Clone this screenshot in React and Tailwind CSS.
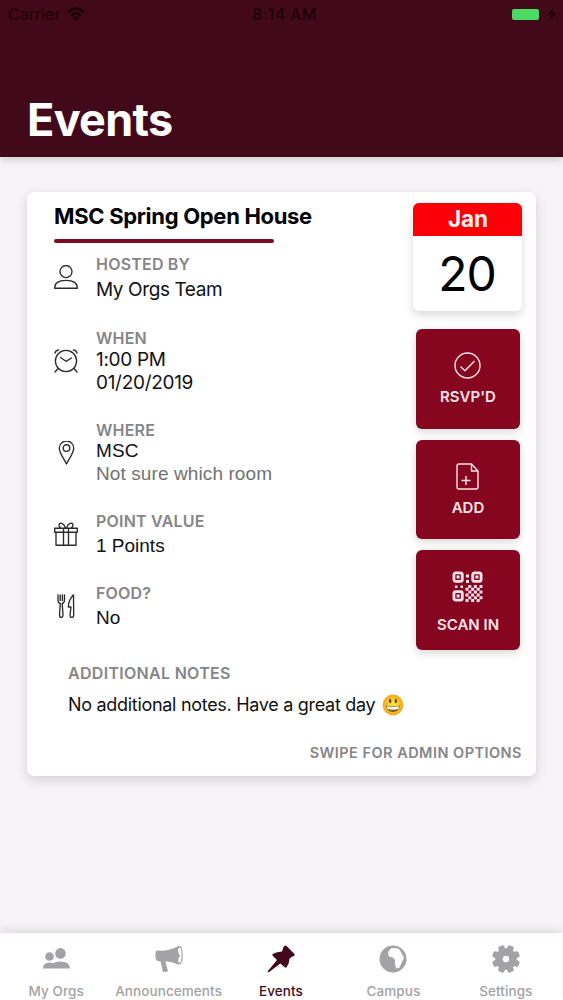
function Label({ children, className = "text-[16px] tracking-[0.2px]" }) {
  return (
    <div className={`pt-px leading-[20px] font-semibold whitespace-nowrap text-[#858587] ${className}`}>
      {children}
    </div>
  );
}

function Row({ icon, label, children, className = "" }) {
  return (
    <div className={`flex items-center gap-[18px] ${className}`}>
      <svg className="h-6 w-6 shrink-0" viewBox="0 0 24 24" fill="none" stroke="#2b2b2d" strokeWidth="1.350" strokeLinejoin="round" strokeLinecap="round">
        {icon}
      </svg>
      <div>
        <Label>{label}</Label>
        {children}
      </div>
    </div>
  );
}

function Action({ children, label, className = "" }) {
  return (
    <button className={`ml-px flex h-[99.5px] w-[104px] flex-col items-center rounded-[6px] bg-[#86051f] text-[#f8e4e8] shadow-[0_3px_8px_rgba(0,0,0,0.16)] ${className}`}>
      {children}
      <span className="text-[15px] leading-[20px] font-semibold whitespace-nowrap">{label}</span>
    </button>
  );
}

function Tab({ children, label, className = "text-[#a3a2a4]" }) {
  return (
    <div className={`flex flex-1 flex-col items-center pt-[10px] ${className}`}>
      <svg className="h-8 w-8" viewBox="0 0 32 32" fill="currentColor">{children}</svg>
      <span className="mt-[7px] text-[13.5px] leading-[18px] font-medium tracking-[0.08px] whitespace-nowrap">{label}</span>
    </div>
  );
}

const checks = [];
for (let r = 0; r < 6; r++) for (let c = 0; c < 6; c++) if ((r + c) % 2 === 1) checks.push([c, r]);

export default function App() {
  return (
    <div className="flex h-[1000px] w-[563px] flex-col overflow-hidden bg-[#f6f4f7] font-['Inter','Liberation_Sans',sans-serif] text-[#111]">
      <header className="flex h-[157px] shrink-0 flex-col bg-[#42091b] shadow-[0_2px_8px_rgba(0,0,0,0.2)]">
        <div className="grid h-7 grid-cols-3 items-center px-2 text-[16px] text-[#1b0209]">
          <div className="flex items-center gap-[7px]">
            <span>Carrier</span>
            <svg className="h-[15px] w-[18px]" viewBox="0 0 18 15" fill="none" stroke="currentColor" strokeWidth="2.600">
              <path d="M1 5.200Q9-2 17 5.200M4 8.500Q9 4.200 14 8.500" />
              <path d="M9 14 5.800 10.800Q9 8.400 12.200 10.800Z" fill="currentColor" stroke="none" />
            </svg>
          </div>
          <span className="pl-[6px] text-center font-medium tracking-[0.3px]">8:14 AM</span>
          <div className="-mr-px flex items-center justify-end gap-[9px]">
            <div className="h-[11px] w-[27px] rounded-[2px] bg-[#4cd964]" />
            <svg className="h-3 w-2" viewBox="0 0 8 12" fill="currentColor"><path d="M5 0 0 7h3.300L2.400 12 8 5H4.500Z" /></svg>
          </div>
        </div>
        <h1 className="mt-[65px] pl-[27px] text-[45px] leading-[54px] font-bold tracking-[-0.7px] text-white">Events</h1>
      </header>

      <main className="mt-[35px] ml-[27px] flex h-[584px] w-[509px] shrink-0 flex-col rounded-[7px] bg-white shadow-[0_4px_12px_rgba(0,0,0,0.15)]">
        <div className="flex h-[458px]">
          <div className="w-[386px] pl-[27px]">
            <h2 className="mt-[9px] text-[22px] leading-[30px] font-bold tracking-[-0.31px] whitespace-nowrap text-black">MSC Spring Open House</h2>
            <div className="mt-[8px] h-[4px] w-[220px] rounded-full bg-[#7f0a24]" />
            <Row className="mt-[10px]" label="HOSTED BY" icon={<>
              <circle cx="12" cy="6.600" r="6" /><path d="M.7 23.200C.5 18 4.500 15.400 12 15.400S23.500 18 23.300 23.200Z" />
            </>}>
              <div className="mt-[3px] pt-[2px] text-[19px] leading-[21px] tracking-[-0.4px] whitespace-nowrap">My Orgs Team</div>
            </Row>
            <Row className="mt-[27px]" label="WHEN" icon={<>
              <circle cx="12" cy="12" r="10.600" /><path d="M6.500 8.500 12 12.300 17.500 9M4 19.500 1 23M20 19.500 23 23M1 4Q1.500 1.500 4.500 1M23 4Q22.500 1.500 19.500 1" />
            </>}>
              <div className="text-[19px] leading-[23px] tracking-[-0.3px] whitespace-nowrap">1:00 PM</div>
              <div className="text-[19px] leading-[23px] tracking-[-0.3px] whitespace-nowrap">01/20/2019</div>
            </Row>
            <Row className="mt-[25px]" label="WHERE" icon={<>
              <path d="M12.500 23C10.500 18.500 5.300 12.200 5.300 7.200a7.200 7.200 0 0 1 14.400 0C19.700 12.200 14.500 18.500 12.500 23Z" /><circle cx="12.500" cy="7" r="3.300" />
            </>}>
              <div className="font-['Liberation_Sans',sans-serif] text-[19px] leading-[22px] tracking-[0.1px] whitespace-nowrap">MSC</div>
              <div className="pb-px font-['Liberation_Sans',sans-serif] text-[19px] leading-[23px] tracking-[0.1px] whitespace-nowrap text-[#717173]">Not sure which room</div>
            </Row>
            <Row className="mt-[24px]" label="POINT VALUE" icon={<>
              <path d="M.7 6.200H23.300V10.200H.7ZM2 10.200V23.200H22V10.200M9.500 6.200V23M14.500 6.200V23M11.500 6C10 1 5.500-.5 5 3Q4.800 5 7 6M12.500 6C14 1 18.500-.5 19 3Q19.200 5 17 6" />
            </>}>
              <div className="mt-[3px] font-['Liberation_Sans',sans-serif] text-[19px] leading-[23px] whitespace-nowrap">1 Points</div>
            </Row>
            <Row className="mt-[25px]" label="FOOD?" icon={<>
              <path d="M4 1V6Q4 9 6.300 9.500L5.500 21Q5.500 23.500 7.200 23.500T9 21L8.200 9.500Q10.500 9 10.500 6V1M6.200 1V6.500M8.400 1V6.500M19.500 .8C16.500 4 14.500 8 14.300 13H17L16 21Q16 23.500 17.800 23.500T19.700 21Z" />
            </>}>
              <div className="mt-[3px] font-['Liberation_Sans',sans-serif] text-[19px] leading-[23px] whitespace-nowrap">No</div>
            </Row>
          </div>

          <div className="flex w-[109px] flex-col items-center pt-[11px]">
            <div className="h-[108px] w-[109px] shrink-0 overflow-hidden rounded-[6px] bg-white text-center shadow-[0_4px_10px_rgba(0,0,0,0.15)]">
              <div className="h-[33px] bg-[#fb0007] pl-px text-[22.5px] leading-[32px] font-bold text-[#ffeef0]">Jan</div>
              <div className="pr-px text-[48px] leading-[76px] tracking-[-1px] text-black">20</div>
            </div>
            <Action className="mt-[18px]" label="RSVP'D">
              <svg className="mt-[23px] mr-[2px] mb-[8px] h-[27px] w-[27px]" viewBox="0 0 27 27" fill="none" stroke="currentColor" strokeWidth="1.400">
                <circle cx="13.500" cy="13.500" r="12.500" /><path d="M6.500 14.500 11 18.700 20.500 9" />
              </svg>
            </Action>
            <Action className="mt-[11px]" label="ADD">
              <svg className="mt-[23px] mr-px mb-[8px] h-[27px] w-[23px]" viewBox="0 0 23 27" fill="none" stroke="currentColor" strokeWidth="1.400" strokeLinejoin="round">
                <path d="M3 1H15.500L22 8V24Q22 26 20 26H3Q1 26 1 24V3Q1 1 3 1ZM15.500 1V8H22M10 13V22M5.500 17.500H14.500" />
              </svg>
            </Action>
            <Action className="mt-[11px]" label="SCAN IN">
              <svg className="mt-[21px] mr-px mb-[13px] h-[31px] w-[31px]" viewBox="0 0 31 31" fill="currentColor">
                <g fill="none" stroke="currentColor" strokeWidth="2.800">
                  <rect x="1.900" y="1.900" width="8.400" height="8.400" rx="1.800" /><rect x="20.700" y="1.900" width="8.400" height="8.400" rx="1.800" /><rect x="1.900" y="20.700" width="8.400" height="8.400" rx="1.800" />
                </g>
                <path d="M4.600 4.600h3v3h-3zM23.400 4.600h3v3h-3zM4.600 23.400h3v3h-3zM14 3.500h3v3h-3zM14 9h3v3h-3zM3 14.500h2.500v2.500H3zM8.500 14.500h2.500v2.500H8.500z" />
                {checks.map(([c, r]) => <rect key={`${c}-${r}`} x={13.500 + c * 2.800} y={14 + r * 2.800} width="3" height="3" rx=".5" />)}
              </svg>
            </Action>
          </div>
        </div>
        <div className="mt-[12px] pl-[41px]">
          <Label className="text-[16px] tracking-[0.3px]">ADDITIONAL NOTES</Label>
          <div className="mt-[10px] flex items-center gap-[7px] text-[18px] leading-[23px] whitespace-nowrap">
            <span className="tracking-[-0.3px]">No additional notes. Have a great day</span>
            <svg className="h-[22px] w-[22px]" viewBox="0 0 22 22">
              <defs><radialGradient id="face"><stop offset=".3" stopColor="#fddc3c" /><stop offset="1" stopColor="#efa51c" /></radialGradient></defs>
              <circle cx="11" cy="11" r="10.400" fill="url(#face)" />
              <ellipse cx="8.200" cy="7" rx="1.100" ry="2.200" fill="#5d3b10" /><ellipse cx="13.800" cy="7" rx="1.100" ry="2.200" fill="#5d3b10" />
              <path d="M4 11.500Q11 13.500 18 11.500Q17.500 18 11 18T4 11.500Z" fill="#8a5613" /><path d="M4.800 12.200Q11 13.800 17.200 12.200L16.500 15Q11 16.500 5.500 15Z" fill="#fff" />
            </svg>
          </div>
        </div>
        <Label className="mt-[26px] pr-[14px] text-right text-[14.5px] tracking-[0.47px]">SWIPE FOR ADMIN OPTIONS</Label>
      </main>

      <nav className="mt-auto flex h-[67px] w-[562px] shrink-0 bg-white shadow-[0_-3px_9px_rgba(0,0,0,0.1),1px_0_0_#fff]">
        <Tab label="My Orgs">
          <circle cx="9.500" cy="13.500" r="4.300" /><circle cx="20.500" cy="10.400" r="5.300" />
          <path d="M3 25.500Q3 19.500 9.500 19.500 11.500 19.500 13 20.200 16 18.500 20 18.500 30 18.500 30 25.500Z" />
        </Tab>
        <Tab label="Announcements">
          <path fillRule="evenodd" d="M3.500 7.500Q2.300 9 2.500 13.500Q2.800 18 5 18L7.500 18.500 10 29 15 28.500 12.500 18.500Q18 18 25 21.500Q29 22 29.600 16Q30 8 28.500 4.500Q27 1.500 24.500 3.500Q16 8.500 3.500 7.500ZM26.500 4.500Q28.500 4.500 28.500 12T26.600 20Q24.800 20 25.500 15Q27 14.500 26.800 12L25.300 10Q24.800 4.500 26.500 4.500Z" />
        </Tab>
        <Tab label="Events" className="text-[#43081c]">
          <path d="M18.500 4Q19.500 1.500 21.500 3L29.500 11Q30 13 27.500 13.500L24.500 15.500Q24.500 20.500 21.500 24.500L20 24.500 15.300 20.500 3.500 29.500 2.500 28.500 12 17 7.500 12.500V11Q12 8.500 17 8.500Z" />
        </Tab>
        <Tab label="Campus">
          <circle cx="16" cy="16" r="13.500" /><path fill="#fff" d="M12 7.500 14.500 5 18.500 5 22 6 24 9 27 15 25 19 22.500 24.500 19.500 25.500 18 21.500V17L16 14.500 12 13.500 11 10Z" />
        </Tab>
        <Tab label="Settings">
          <circle cx="16" cy="16" r="7" fill="none" stroke="currentColor" strokeWidth="7.600" />
          {[0, 45, 90, 135, 180, 225, 270, 315].map((a) => <rect key={a} x="12.800" y="2" width="6.400" height="6" rx="1.800" transform={`rotate(${a + 22.5} 16 16)`} />)}
        </Tab>
      </nav>
    </div>
  );
}
